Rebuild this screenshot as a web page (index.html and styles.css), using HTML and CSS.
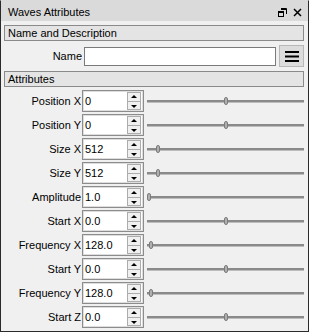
FILE: index.html
```html
<!DOCTYPE html>
<html lang="en">
<head>
  <meta charset="UTF-8" />
  <title>Waves Attributes</title>
  <link rel="stylesheet" href="styles.css">
</head>
<body>
  <div class="panel">
    <div class="titlebar">
      <span class="title">Waves Attributes</span>
      <span class="title-icons">
        <svg width="9" height="9" viewBox="0 0 9 9">
          <path d="M3 0.5h5.5v5.5" fill="none" stroke="#000" stroke-width="1"/>
          <path d="M3 1h5" stroke="#000" stroke-width="2"/>
          <rect x="0.5" y="3.5" width="5" height="5" fill="#dadada" stroke="#000"/>
          <path d="M0 4h6" stroke="#000" stroke-width="2"/>
        </svg>
        <svg width="9" height="9" viewBox="0 0 9 9">
          <path d="M1 1L8 8M8 1L1 8" stroke="#000" stroke-width="1.5"/>
        </svg>
      </span>
    </div>

    <div class="content">
      <div class="group-head">Name and Description</div>
      <div class="name-row">
        <label class="label name-label">Name</label>
        <input type="text" class="name-input" />
        <button class="menu-btn">
          <svg width="14" height="11" viewBox="0 0 14 11">
            <path d="M0 1h14M0 5.5h14M0 10h14" stroke="#000" stroke-width="2"/>
          </svg>
        </button>
      </div>

      <div class="group-head">Attributes</div>
      <div class="attrs" id="attrs"></div>
    </div>
  </div>

  <script>
    // name, value, slider position (0..1)
    const attributes = [
      ["Position X", "0", 0.5],
      ["Position Y", "0", 0.5],
      ["Size X", "512", 0.06],
      ["Size Y", "512", 0.06],
      ["Amplitude", "1.0", 0.0],
      ["Start X", "0.0", 0.5],
      ["Frequency X", "128.0", 0.015],
      ["Start Y", "0.0", 0.5],
      ["Frequency Y", "128.0", 0.015],
      ["Start Z", "0.0", 0.5]
    ];

    const list = document.getElementById("attrs");
    attributes.forEach(([name, value, pos]) => {
      const row = document.createElement("div");
      row.className = "attr-row";
      row.innerHTML = `
        <span class="label">${name}</span>
        <div class="spinbox">
          <span class="spin-value">${value}</span>
          <span class="spin-btns">
            <span class="spin-up"></span>
            <span class="spin-down"></span>
          </span>
        </div>
        <div class="slider">
          <div class="groove"></div>
          <div class="handle" style="left: calc(${pos} * (100% - 4px))"></div>
        </div>`;
      list.appendChild(row);
    });
  </script>
</body>
</html>
```

FILE: styles.css
```css
body {
  margin: 0;
  font-family: 'Liberation Sans', Arial, sans-serif;
  font-size: 11px;
  color: #000;
}
.panel {
  width: 309px;
  height: 332px;
  box-sizing: border-box;
  border: 1px solid #2a2a2a;
  border-top-color: #dadada;
  background-color: #f0f0f0;
}
.titlebar {
  height: 20px;
  background-color: #dadada;
  display: flex;
  align-items: center;
  justify-content: space-between;
  padding: 0 6px 0 7px;
}
.title {
  font-size: 11px;
  padding-top: 1px;
}
.title-icons {
  display: flex;
  gap: 6px;
  align-items: center;
  padding-top: 2px;
}
.title-icons svg {
  display: block;
}
.content {
  padding: 4px 4px 0 3px;
}
.group-head {
  height: 16px;
  box-sizing: border-box;
  border: 1px solid #8a8a8a;
  background-color: #e4e4e4;
  padding-left: 3px;
  line-height: 14px;
}
.name-row {
  display: flex;
  align-items: center;
  height: 22px;
  margin: 4px 0;
}
.label {
  width: 77px;
  text-align: right;
  flex-shrink: 0;
}
.name-label {
  width: 78px;
}
.name-input {
  width: 193px;
  height: 19px;
  box-sizing: border-box;
  margin: 0 0 0 2px;
  border: 1px solid #7a7a7a;
  background: #fff;
  padding: 0 2px;
}
.menu-btn {
  width: 25px;
  height: 22px;
  margin-left: 3px;
  padding: 0;
  border: 1px solid #b8b8b8;
  background-color: #dcdcdc;
  display: flex;
  align-items: center;
  justify-content: center;
}
.attrs {
  margin-top: 3px;
  display: flex;
  flex-direction: column;
  gap: 2px;
}
.attr-row {
  display: flex;
  align-items: center;
  height: 22px;
}
.spinbox {
  width: 62px;
  height: 22px;
  box-sizing: border-box;
  margin-left: 1px;
  border: 1px solid #8c8c8c;
  box-shadow: inset 0 0 0 1px #dedede;
  background: #fff;
  display: flex;
  align-items: center;
  flex-shrink: 0;
}
.spin-value {
  flex: 1;
  padding-left: 2px;
}
.spin-btns {
  width: 14px;
  height: 18px;
  margin-right: 2px;
  display: flex;
  flex-direction: column;
}
.spin-up, .spin-down {
  flex: 1;
  box-sizing: border-box;
  border: 1px solid #acacac;
  background: #f0f0f0;
  position: relative;
}
.spin-down {
  border-top: none;
}
.spin-up::after, .spin-down::after {
  content: "";
  position: absolute;
  left: 3px;
  border-left: 3px solid transparent;
  border-right: 3px solid transparent;
}
.spin-up::after {
  top: 2px;
  border-bottom: 3px solid #000;
}
.spin-down::after {
  top: 3px;
  border-top: 3px solid #000;
}
.slider {
  flex: 1;
  height: 22px;
  margin-left: 3px;
  position: relative;
}
.groove {
  position: absolute;
  left: 0;
  right: 0;
  top: 10px;
  height: 2px;
  background-color: #8a8a8a;
  border-bottom: 1px solid #bdbdbd;
}
.handle {
  position: absolute;
  top: 7px;
  width: 4px;
  height: 8px;
  box-sizing: border-box;
  border: 1px solid #7c7c7c;
  border-radius: 2px;
  background-color: #b0b0b0;
}
```
